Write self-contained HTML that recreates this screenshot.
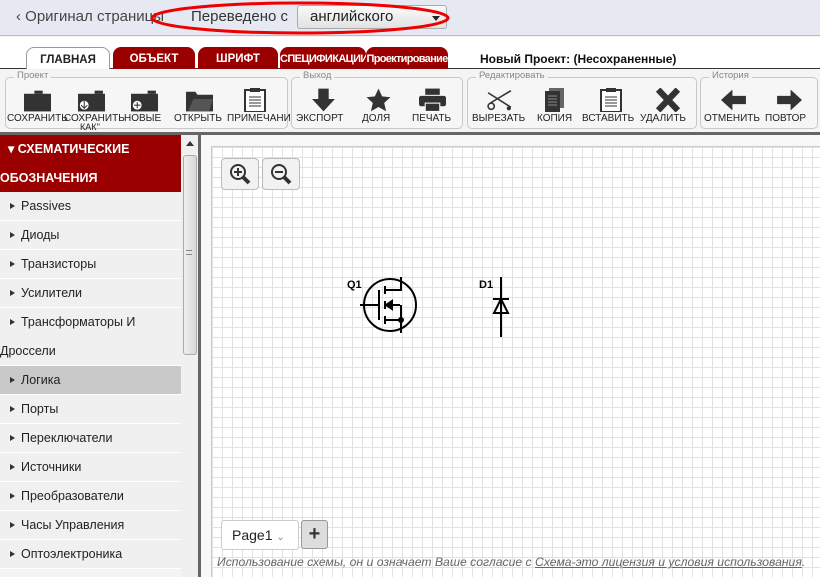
<!DOCTYPE html>
<html><head><meta charset="utf-8"><style>
*{margin:0;padding:0;box-sizing:border-box}
body{width:820px;height:577px;overflow:hidden;background:#f4f4f4;font-family:"Liberation Sans",Arial,sans-serif;position:relative}
.a{position:absolute}
#top{left:0;top:0;width:820px;height:36px;background:#e6e9f2;border-bottom:1px solid #b8bcc4}
.tab{position:absolute;top:47px;height:22px;color:#fff;font-weight:bold;font-size:11.5px;text-align:center;line-height:24px;background:#9a0000;border-radius:8px 8px 0 0;white-space:nowrap;overflow:hidden}
.grp{position:absolute;top:77px;height:52px;border:1px solid #c8c8c8;border-radius:5px;background:#f6f6f6}
.gl{position:absolute;top:-8px;left:8px;background:#f4f4f4;padding:0 3px;font-size:9.5px;color:#888}
.btn{position:absolute;top:35px;font-size:10px;color:#222;white-space:nowrap}
.ic{position:absolute;top:10px;width:27px;height:24px}
.row{position:absolute;left:0;width:181px;height:29px;border-bottom:1px solid #fff;font-size:12.5px;color:#222;line-height:28px;padding-left:21px;background:#f0f0f0}
.row:before{content:"";position:absolute;left:10px;top:11px;border-left:5px solid #333;border-top:3px solid transparent;border-bottom:3px solid transparent}
</style></head><body>
<div id="top" class="a"></div>
<div class="a" style="left:16px;top:8px;font-size:15px;color:#444">‹ Оригинал страницы</div>
<div class="a" style="left:191px;top:8px;font-size:15px;color:#333">Переведено с</div>
<div class="a" style="left:297px;top:5px;width:150px;height:24px;border:1px solid #aaa;border-radius:3px;background:linear-gradient(#fafafa,#e2e2e2);font-size:15px;padding:2px 12px;color:#222">английского<span style="position:absolute;right:6px;top:10px;border-top:5px solid #222;border-left:4px solid transparent;border-right:4px solid transparent"></span></div>
<svg class="a" style="left:150px;top:0" width="305" height="40"><ellipse cx="150" cy="18" rx="148" ry="15" fill="none" stroke="#e00" stroke-width="3"/></svg>
<div class="a" style="left:0;top:37px;width:820px;height:33px;background:#fff"></div>
<div class="a" style="left:0;top:68px;width:820px;height:1px;background:#333"></div>
<div class="tab" style="left:26px;width:84px;background:#fff;color:#222;border:1px solid #999;border-bottom:none;height:23px">ГЛАВНАЯ</div>
<div class="tab" style="left:113px;width:82px">ОБЪЕКТ</div>
<div class="tab" style="left:198px;width:80px">ШРИФТ</div>
<div class="tab" style="left:280px;width:86px;font-size:11px;letter-spacing:-0.6px">СПЕЦИФИКАЦИИ</div>
<div class="tab" style="left:366px;width:82px;font-size:11px;letter-spacing:-0.7px">Проектирование</div>
<div class="a" style="left:480px;top:52px;font-size:12px;font-weight:bold;color:#111">Новый Проект: (Несохраненные)</div>
<div class="a" style="left:0;top:69px;width:820px;height:64px;background:#f4f4f4"></div>

<div class="grp" style="left:5px;width:283px"><span class="gl">Проект</span>
<svg class="ic" style="left:18px" viewBox="0 0 26 22"><rect x="0" y="5" width="26" height="17" fill="#333"/><rect x="10" y="2" width="8" height="3" fill="#333"/></svg>
<svg class="ic" style="left:72px" viewBox="0 0 26 22"><rect x="0" y="5" width="26" height="17" fill="#333"/><rect x="16" y="2" width="8" height="3" fill="#333"/><circle cx="6" cy="16" r="5" fill="#fff" stroke="#333" stroke-width="1.5"/><path d="M6 12v7M3 16l3 3 3-3" stroke="#333" fill="none"/></svg>
<svg class="ic" style="left:125px" viewBox="0 0 26 22"><rect x="0" y="5" width="26" height="17" fill="#333"/><rect x="16" y="2" width="8" height="3" fill="#333"/><circle cx="6" cy="16" r="5" fill="#fff" stroke="#333" stroke-width="1.5"/><path d="M6 13v6M3 16h6" stroke="#333"/></svg>
<svg class="ic" style="left:180px" viewBox="0 0 26 22"><path d="M0 3h9l2 3h15v16H0z" fill="#333"/><path d="M2 22l5-12h19l-4 12z" fill="#555"/></svg>
<svg class="ic" style="left:238px;width:22px" viewBox="0 0 22 24"><rect x="1" y="2" width="20" height="22" fill="#fff" stroke="#333" stroke-width="2"/><rect x="6" y="0" width="10" height="4" fill="#333"/><path d="M5 9h12M5 12h12M5 15h12M5 18h12" stroke="#333"/></svg>
<span class="btn" style="left:1px">СОХРАНИТЬ</span><span class="btn" style="left:58px">СОХРАНИТЬ</span><span class="btn" style="left:74px;top:44px;font-size:9px">КАК''</span><span class="btn" style="left:118px">НОВЫЕ</span><span class="btn" style="left:168px">ОТКРЫТЬ</span><span class="btn" style="left:221px">ПРИМЕЧАНИЯ</span></div>

<div class="grp" style="left:291px;width:172px"><span class="gl">Выход</span>
<svg class="ic" style="left:18px" viewBox="0 0 26 22"><path d="M8 0h10v10h6L13 22 2 10h6z" fill="#333"/></svg>
<svg class="ic" style="left:73px" viewBox="0 0 26 22"><path d="M13 0l3.5 7.5 8 .8-6 5.5 1.8 8L13 17.8 5.7 21.8l1.8-8-6-5.5 8-.8z" fill="#333"/></svg>
<svg class="ic" style="left:127px" viewBox="0 0 26 22"><rect x="6" y="0" width="14" height="6" fill="#333"/><rect x="0" y="7" width="26" height="10" rx="2" fill="#333"/><rect x="6" y="14" width="14" height="8" fill="#333" stroke="#fff"/></svg>
<span class="btn" style="left:4px">ЭКСПОРТ</span><span class="btn" style="left:70px">ДОЛЯ</span><span class="btn" style="left:120px">ПЕЧАТЬ</span></div>

<div class="grp" style="left:467px;width:230px"><span class="gl">Редактировать</span>
<svg class="ic" style="left:18px" viewBox="0 0 26 22"><path d="M2 4l22 14M24 2L4 14" stroke="#333" stroke-width="1.5"/><circle cx="5" cy="17" r="3" fill="none" stroke="#333" stroke-width="1.5"/><circle cx="22" cy="19" r="2" fill="#333"/></svg>
<svg class="ic" style="left:76px;width:20px" viewBox="0 0 20 24"><rect x="5" y="0" width="15" height="20" fill="#666"/><rect x="1" y="3" width="15" height="21" fill="#333"/><path d="M4 8h9M4 11h9M4 14h9M4 17h9" stroke="#888"/></svg>
<svg class="ic" style="left:132px;width:22px" viewBox="0 0 22 24"><rect x="1" y="2" width="20" height="22" fill="#fff" stroke="#333" stroke-width="2"/><rect x="6" y="0" width="10" height="4" fill="#333"/><path d="M5 9h12M5 12h12M5 15h12M5 18h12" stroke="#333"/></svg>
<svg class="ic" style="left:186px" viewBox="0 0 26 22"><path d="M4 1l19 20M23 1L4 21" stroke="#333" stroke-width="6"/></svg>
<span class="btn" style="left:4px">ВЫРЕЗАТЬ</span><span class="btn" style="left:69px">КОПИЯ</span><span class="btn" style="left:114px">ВСТАВИТЬ</span><span class="btn" style="left:172px">УДАЛИТЬ</span></div>

<div class="grp" style="left:700px;width:118px"><span class="gl">История</span>
<svg class="ic" style="left:20px" viewBox="0 0 26 22"><path d="M0 11L11 1v6h13v8H11v6z" fill="#333"/></svg>
<svg class="ic" style="left:74px" viewBox="0 0 26 22"><path d="M26 11L15 1v6H2v8h13v6z" fill="#333"/></svg>
<span class="btn" style="left:3px">ОТМЕНИТЬ</span><span class="btn" style="left:64px">ПОВТОР</span></div>

<div class="a" style="left:0;top:132px;width:820px;height:3px;background:#666"></div>
<div class="a" style="left:0;top:135px;width:181px;height:57px;background:#9a0000;color:#fff;font-weight:bold;font-size:12.5px;line-height:29px"><div style="padding-left:8px">▾ СХЕМАТИЧЕСКИЕ</div><div>ОБОЗНАЧЕНИЯ</div></div>
<div class="row" style="top:192px">Passives</div>
<div class="row" style="top:221px">Диоды</div>
<div class="row" style="top:250px">Транзисторы</div>
<div class="row" style="top:279px">Усилители</div>
<div class="row" style="top:308px;border-bottom:none">Трансформаторы И</div>
<div class="a" style="left:0;top:337px;width:181px;height:29px;background:#f0f0f0;border-bottom:1px solid #fff;font-size:12.5px;color:#222;line-height:28px">Дроссели</div>
<div class="row" style="top:366px;background:#c9c9c9">Логика</div>
<div class="row" style="top:395px">Порты</div>
<div class="row" style="top:424px">Переключатели</div>
<div class="row" style="top:453px">Источники</div>
<div class="row" style="top:482px">Преобразователи</div>
<div class="row" style="top:511px">Часы Управления</div>
<div class="row" style="top:540px">Оптоэлектроника</div>
<div class="a" style="left:181px;top:135px;width:17px;height:442px;background:#f0f0f0"></div>
<div class="a" style="left:186px;top:141px;border-bottom:5px solid #333;border-left:4px solid transparent;border-right:4px solid transparent"></div>
<div class="a" style="left:183px;top:155px;width:14px;height:200px;border:1px solid #aaa;border-radius:3px;background:linear-gradient(90deg,#eee,#d8d8d8)"></div>
<div class="a" style="left:186px;top:250px;width:6px;height:5px;border-top:1px solid #888;border-bottom:1px solid #888"></div>
<div class="a" style="left:198px;top:135px;width:3px;height:442px;background:#666"></div>
<div class="a" style="left:201px;top:135px;width:619px;height:442px;background:#f8f8f8"></div>
<div class="a" style="left:211px;top:146px;width:609px;height:431px;border-left:1px solid #ccc;border-top:1px solid #ccc;background-color:#fff;background-image:linear-gradient(90deg,#e2e2e2 1px,transparent 1px),linear-gradient(#e2e2e2 1px,transparent 1px);background-size:10px 10px"></div>
<div class="a" style="left:221px;top:158px;width:38px;height:32px;border:1px solid #bbb;border-radius:4px;background:#f2f2f2"></div>
<div class="a" style="left:262px;top:158px;width:38px;height:32px;border:1px solid #bbb;border-radius:4px;background:#f2f2f2"></div>
<svg class="a" style="left:229px;top:163px" width="24" height="24"><circle cx="9" cy="9" r="7" fill="none" stroke="#333" stroke-width="2"/><path d="M5 9h8M9 5v8" stroke="#333" stroke-width="2"/><path d="M14 14l6 6" stroke="#333" stroke-width="4"/></svg>
<svg class="a" style="left:270px;top:163px" width="24" height="24"><circle cx="9" cy="9" r="7" fill="none" stroke="#333" stroke-width="2"/><path d="M5 9h8" stroke="#333" stroke-width="2"/><path d="M14 14l6 6" stroke="#333" stroke-width="4"/></svg>
<svg class="a" style="left:340px;top:270px" width="180" height="72" fill="none" stroke="#000" stroke-width="2">
<text x="7" y="18" font-size="11" font-weight="bold" fill="#000" stroke="none" font-family="Liberation Sans">Q1</text>
<circle cx="50" cy="35" r="26"/>
<path d="M20 35h19M39 20v30M45 16v8M45 31v8M45 46v8M45 20h16V7M45 35h15M45 50h16v13M61 35v15"/>
<path d="M46 35l6-4v8z" fill="#000"/>
<circle cx="61" cy="50" r="2" fill="#000"/>
<text x="139" y="18" font-size="11" font-weight="bold" fill="#000" stroke="none" font-family="Liberation Sans">D1</text>
<path d="M161 7v60M153 29h16M161 29l-7 14h14z"/>
</svg>
<div class="a" style="left:221px;top:520px;width:78px;height:30px;border:1px solid #ccc;border-radius:3px;background:#fff;font-size:14px;padding:6px 10px;color:#222">Page1 <span style="font-size:10px;color:#888">⌄</span></div>
<div class="a" style="left:301px;top:520px;width:27px;height:29px;border:1px solid #999;border-radius:3px;background:#ddd;font-size:20px;font-weight:bold;text-align:center;line-height:27px;color:#333">+</div>
<div class="a" style="left:217px;top:555px;font-size:12.2px;font-style:italic;color:#666;white-space:nowrap">Использование схемы, он и означает Ваше согласие с <u>Схема-это лицензия и условия использования</u>.</div>
</body></html>
